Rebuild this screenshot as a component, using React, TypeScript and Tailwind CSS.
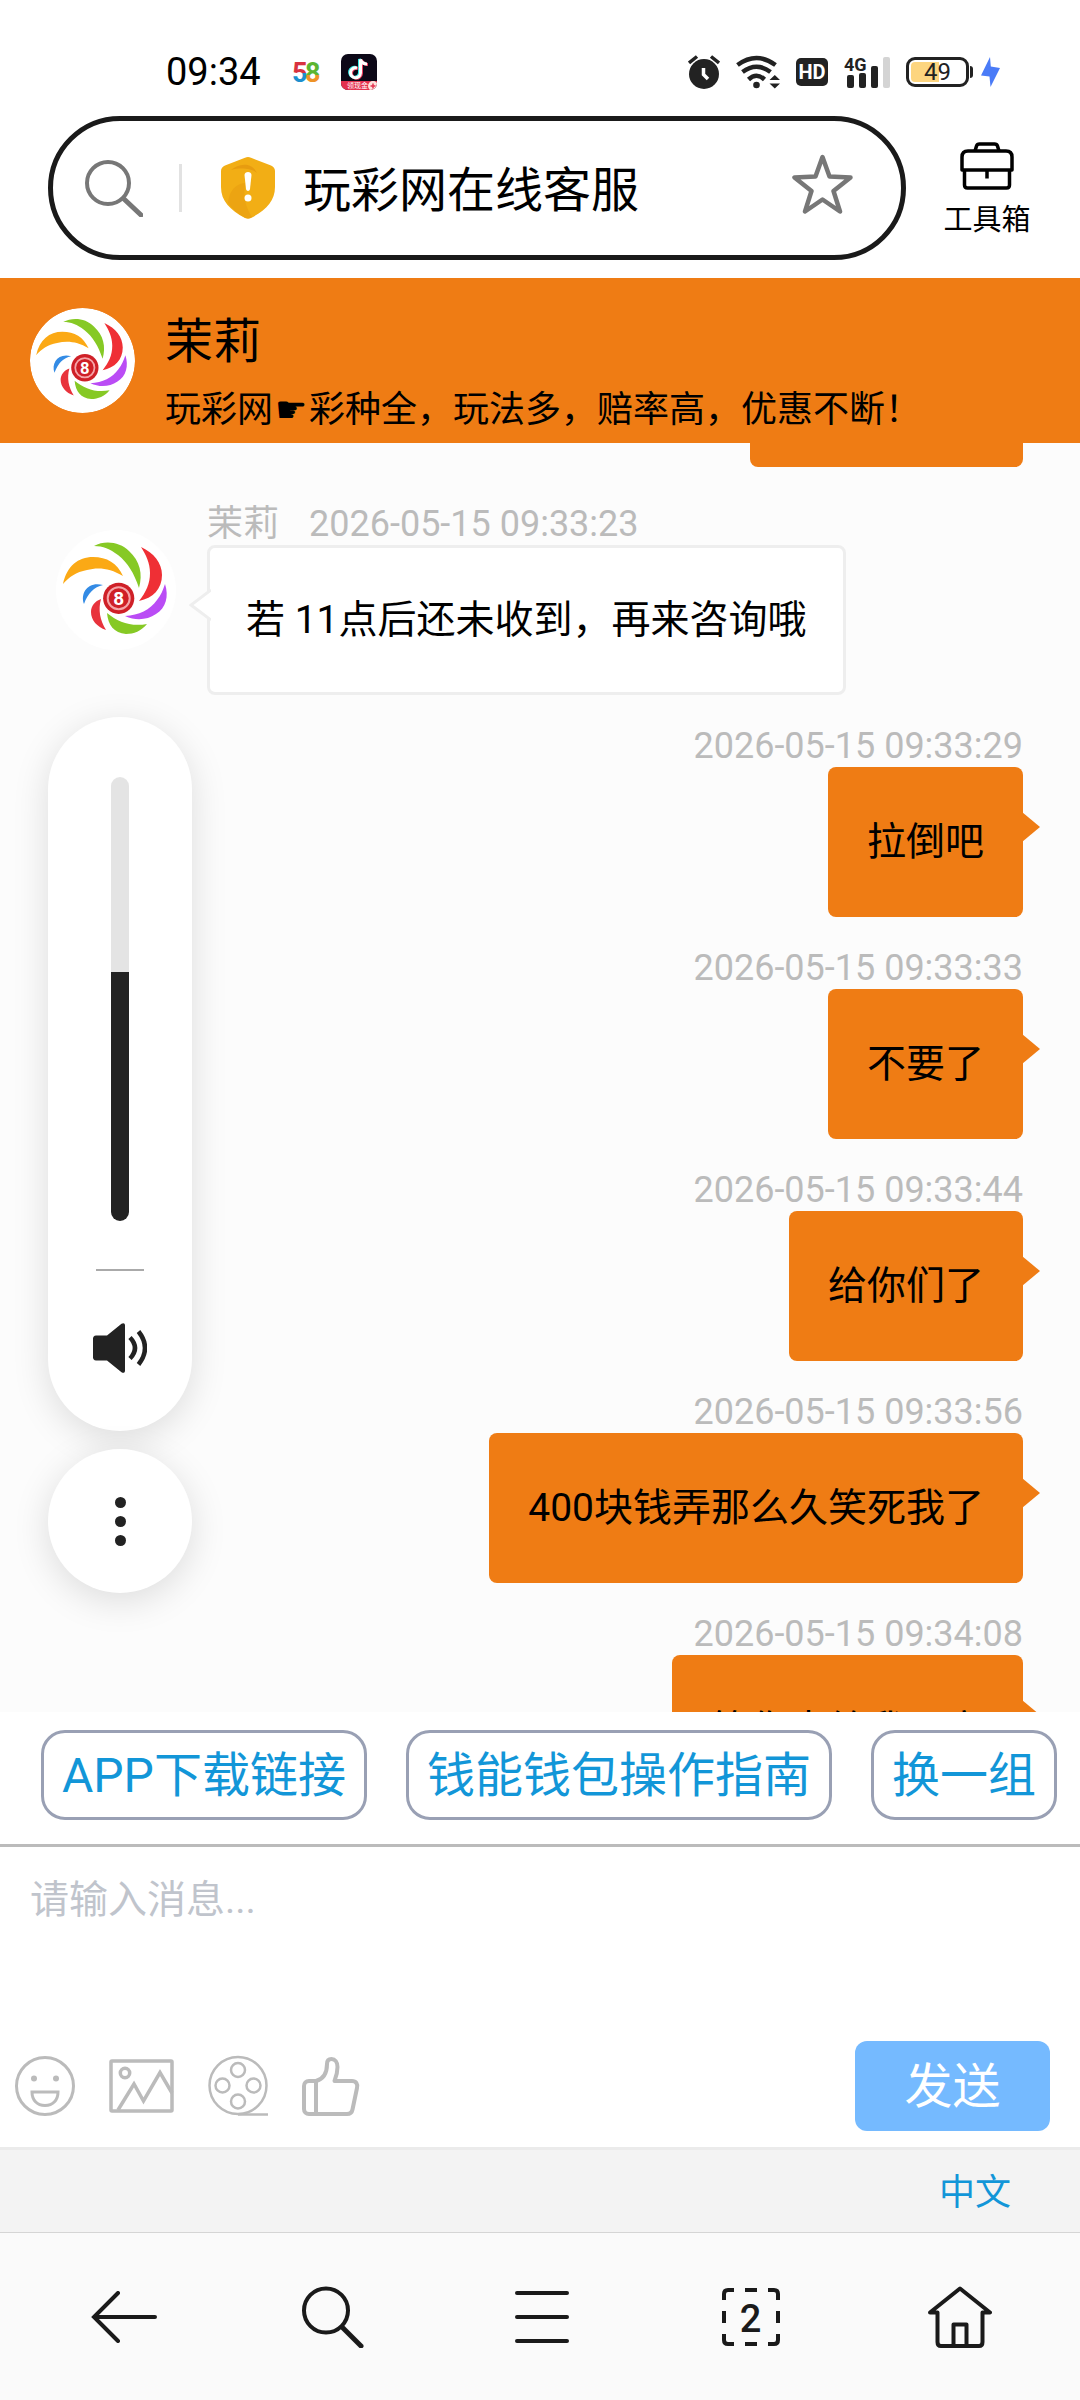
import { useState } from 'react'

const replies = [
  { time: '2026-05-15 09:33:29', text: '拉倒吧' },
  { time: '2026-05-15 09:33:33', text: '不要了' },
  { time: '2026-05-15 09:33:44', text: '给你们了' },
  { time: '2026-05-15 09:33:56', text: '400块钱弄那么久笑死我了' },
  { time: '2026-05-15 09:34:08', text: '等你来给我开户' },
]

const shortcuts = ['APP下载链接', '钱能钱包操作指南', '换一组']

function Logo({ className }: { className: string }) {
  return (
    <svg className={className} viewBox="6 10 120 120">
      <circle cx="66" cy="70" r="60" fill="#fff" />
      <path d="M13 64C17 46 28 37 43 37c14 0 24 6 30 19C60 48 48 47 37 50c-11 2-18 7-24 14z" fill="#fba915" />
      <path d="M44 26c11-6 26-4 35 5 11 10 14 23 10 37C84 53 78 43 68 35c-8-6-15-9-24-9z" fill="#86c925" />
      <path d="M91 27c13 6 21 16 21 28 0 14-9 23-23 26 7-9 11-17 11-28 0-10-4-18-9-26z" fill="#ef2f35" />
      <path d="M115 64c4 12 1 24-9 30-9 6-20 7-31 2 14-1 25-6 32-16 4-5 6-10 8-16z" fill="#ba4cf5" />
      <path d="M57 93c11 9 24 14 40 11-6 7-13 10-21 10-12-1-18-9-19-21z" fill="#86c925" />
      <path d="M51 79c-3 11-1 21 5 31-9-3-15-10-15-18 0-6 4-11 10-13z" fill="#e8333c" />
      <path d="M53 65c-9 2-15 8-19 19-4-11 4-23 19-19z" fill="#338be5" />
      <circle cx="68.700" cy="78.300" r="15.600" fill="#cf2027" />
      <circle cx="68.700" cy="78.300" r="11" fill="none" stroke="#f5a5a8" strokeWidth="2" />
      <text x="68.700" y="85" textAnchor="middle" fontSize="19" fontWeight="700" fill="#fff">8</text>
    </svg>
  )
}

function StatusBar() {
  return (
    <div className="flex h-[116px] items-center justify-between pt-7 pr-20 pl-[166px]">
      <div className="flex items-center">
        <span className="text-[38px] leading-none">09:34</span>
        <svg className="ml-8 w-7 h-9" viewBox="0 0 28 36">
          <defs>
            <linearGradient id="five" x1="0" y1="0" x2="0" y2="1">
              <stop offset=".5" stopColor="#d8323f" />
              <stop offset=".5" stopColor="#1d8fce" />
            </linearGradient>
            <linearGradient id="eight" x1="0" y1="0" x2="0" y2="1">
              <stop offset=".55" stopColor="#5cb531" />
              <stop offset=".55" stopColor="#ee9327" />
            </linearGradient>
          </defs>
          <text x="-1" y="28" fontSize="27" fontWeight="700" fill="url(#five)">5</text>
          <text x="12" y="28" fontSize="27" fontWeight="700" fill="url(#eight)">8</text>
        </svg>
        <svg className="ml-5 size-9" viewBox="0 0 36 36">
          <clipPath id="tile"><rect width="36" height="36" rx="7" /></clipPath>
          <g clipPath="url(#tile)">
            <rect width="36" height="36" fill="#0c0817" />
            <g fill="none" strokeWidth="3">
              <path d="M15 13.500a5 5 0 1 0 3.500 5V5c1 3 3 4.500 6.500 4.500" stroke="#39e6e4" />
              <path d="M17 14.500a5 5 0 1 0 3.500 5V6c1 3 3 4.500 6.500 4.500" stroke="#ef3d5f" />
              <path d="M16 14a5 5 0 1 0 3.500 5V5.500c1 3 3 4.500 6.500 4.500" stroke="#fff" />
            </g>
            <path d="M0 27h36v9H0z" fill="#e4314f" />
            <circle cx="32" cy="32" r="5" fill="#fde3dc" />
            <path d="M29.500 32h5M32 29.500v5" stroke="#e4314f" strokeWidth="1.500" />
            <text x="6" y="34" fontSize="7" fill="#fff">领现金</text>
          </g>
        </svg>
      </div>

      <div className="flex items-center gap-4 text-[#222]">
        <svg className="h-[34px] w-8" viewBox="0 0 32 34" fill="none" stroke="currentColor" strokeWidth="3.500">
          <circle cx="16" cy="19" r="15" fill="currentColor" stroke="none" />
          <path d="M1 8l8-6.500M31 8l-8-6.500" />
          <path d="M15.500 13v6.500L20 24" stroke="#fff" />
        </svg>
        <svg className="h-[34px] w-11" viewBox="0 0 44 34" fill="none" stroke="currentColor" strokeWidth="4.500">
          <path d="M1.500 10Q20.500-4 39.500 10M6.500 17Q20.500 6.500 34.500 17M12.500 24.500Q20.500 17 28.500 24.500" />
          <circle cx="20.500" cy="30" r="3.300" fill="currentColor" stroke="none" />
          <path d="M33.500 25l5.300-5 5.200 5zM33.500 28.500h10.500l-5.200 5z" fill="currentColor" stroke="none" />
        </svg>
        <span className="flex h-7 w-8 items-center justify-center rounded-[5px] bg-[#222] text-[20px] leading-none font-bold text-white">HD</span>
        <svg className="h-9 w-[46px]" viewBox="0 0 46 36" fill="currentColor">
          <text x="0" y="17" fontSize="18" fontWeight="700">4G</text>
          <rect x="3" y="21" width="7" height="13" rx="2" />
          <rect x="15" y="19" width="7" height="15" rx="2" />
          <rect x="27" y="12" width="7" height="22" rx="2" />
          <rect x="39" y="3" width="7" height="31" rx="2" fill="#d4d4d4" />
        </svg>
        <div className="flex items-center">
          <span className="flex h-[30px] w-[63px] items-center justify-center rounded-[9px] border-[3px] border-[#222] bg-[linear-gradient(to_right,#fdd57f_52%,#fff_52%)] bg-clip-content p-[2px] text-[24px] leading-none">49</span>
          <span className="ml-px h-3 w-[3px] rounded-r bg-[#222]" />
          <svg className="ml-2 h-[30px] w-[19px]" viewBox="0 0 19 30">
            <path d="M9 0L0 18.500l8.500 1L9.500 30 19 11l-9.200-1.500z" fill="#4a7bf7" />
          </svg>
        </div>
      </div>
    </div>
  )
}

function AddressBar() {
  return (
    <div className="flex h-[144px] pl-12 mb-[18px]">
      <div className="flex min-w-0 flex-1 items-center rounded-full border-[5px] border-[#1a1a1a] pr-12 pl-8">
        <svg className="size-[58px]" viewBox="0 0 58 58" fill="none" stroke="#777" strokeLinecap="round">
          <circle cx="23" cy="24" r="21" strokeWidth="4" />
          <path d="M39 40l17 16" strokeWidth="5" />
        </svg>
        <span className="mr-[39px] ml-9 h-12 w-[3px] bg-[#e2e2e2]" />
        <svg className="h-[62px] w-[54px]" viewBox="0 0 54 62">
          <path d="M24 .8c2-1 4-1 6 0L50 8.500c2.500 1 4 3 4 5.500v16c0 14-9 23-24 31-2 1-4 1-6 0C9 53 0 44 0 30V14c0-2.500 1.500-4.500 4-5.500z" fill="#f2ae15" />
          <path d="M10 13c7-6 20-9 26 3-4-4-16-6-26-3z" fill="#e79c10" />
          <path d="M7 46c1-12 8-20 18-20-4 12 0 25 6 34-2 1.500-5 1.500-7 .8C17 57 11 52 7 46z" fill="#e99f11" opacity=".7" />
          <path d="M23.500 18c0-4 7-4 7 0L29 32c-.4 2.500-3.600 2.500-4 0z" fill="#fff" />
          <circle cx="27" cy="41" r="3.500" fill="#fff" />
        </svg>
        <input
          aria-label="地址栏"
          defaultValue="玩彩网在线客服"
          className="ml-7 h-20 min-w-0 flex-1 bg-transparent pb-1 text-[48px] text-black outline-none"
        />
        <button aria-label="收藏" className="pb-2">
          <svg className="h-[60px] w-[61px]" viewBox="0 0 61 60" fill="none" stroke="#777" strokeWidth="4.500" strokeLinejoin="round">
            <path d="M30.500 3l7 19.500 21 1-17 13.500L48 57.500l-17.500-12L13 57.500 19.500 37 2.500 23.500l21-1z" />
          </svg>
        </button>
      </div>
      <button className="mr-3 flex w-[162px] flex-col items-center pt-[26px] text-[29px] leading-[44px]">
        <svg className="mb-2 h-12 w-[54px]" viewBox="0 0 54 48" fill="none" stroke="currentColor" strokeWidth="3.500" strokeLinejoin="round">
          <path d="M15 9l1.500-5c.5-1.500 1.500-2 3-2h15c1.500 0 2.500.5 3 2L39 9" />
          <path d="M2 28V15c0-4 2-6 6-6h38c4 0 6 2 6 6v13z" />
          <path d="M4.500 28v15c0 2 1 3 3 3h39c2 0 3-1 3-3V28M27 28v8.500" />
        </svg>
        工具箱
      </button>
    </div>
  )
}

function VolumePanel() {
  const [volume, setVolume] = useState(56)

  return (
    <div className="absolute top-[717px] left-12 flex flex-col gap-[18px] text-[#222]">
      <div className="flex w-36 flex-col items-center rounded-full bg-white pt-[60px] pb-[58px] shadow-[0_8px_36px_rgba(0,0,0,0.13)]">
        <input
          type="range"
          aria-label="音量"
          value={volume}
          onChange={(e) => setVolume(Number(e.target.value))}
          className="h-[444px] w-[18px] appearance-none rounded-full [direction:rtl] [writing-mode:vertical-lr] [&::-webkit-slider-thumb]:size-0 [&::-webkit-slider-thumb]:appearance-none"
          style={{ background: `linear-gradient(to top, #222 ${volume}%, #e4e4e4 ${volume}%)` }}
        />
        <span className="mt-12 h-[2px] w-12 bg-[#aaa]" />
        <button aria-label="静音" className="mt-[52px]">
          <svg className="block h-[50px] w-[54px]" viewBox="0 0 54 50" fill="currentColor">
            <path d="M3 12.500h11L28.500.8C30.500-.5 32 .3 32 2.500v45c0 2.200-1.500 3-3.500 1.700L14 37.500H3c-2 0-3-1.500-3-3v-19c0-1.500 1-3 3-3z" />
            <path d="M37 14.500q10 10.500 0 21M45.500 8.500q13 16.500 0 33" fill="none" stroke="currentColor" strokeWidth="4.500" />
          </svg>
        </button>
      </div>
      <button aria-label="更多" className="flex size-36 flex-col items-center justify-center gap-2 rounded-full bg-white shadow-[0_8px_36px_rgba(0,0,0,0.13)]">
        <span className="size-[11px] rounded-full bg-[#222]" />
        <span className="size-[11px] rounded-full bg-[#222]" />
        <span className="size-[11px] rounded-full bg-[#222]" />
      </button>
    </div>
  )
}

function Messages() {
  return (
    <main className="min-h-0 flex-1 overflow-hidden bg-[#fcfcfc] pr-[57px]">
      {/* Tail end of the bubble that is scrolled under the header */}
      <div className="ml-auto h-6 w-[273px] rounded-b-lg bg-[#ef7c14]" />

      <div className="mt-9 flex items-start gap-[31px] pl-14">
        <Logo className="mt-[27px] size-[120px]" />
        <div>
          <p className="flex gap-[30px] text-[36px] leading-[42px] text-[#bbb]">
            <span>茉莉</span>
            <time>2026-05-15 09:33:23</time>
          </p>
          <div className="relative rounded-lg border-[3px] border-[#eee] bg-white px-9 py-[49px] text-[39px] leading-[46px]">
            <svg className="absolute top-[41px] -left-[21px] h-[32px] w-[22px]" viewBox="0 0 22 32">
              <path d="M22 1L2 16l20 15" fill="#fff" stroke="#eee" strokeWidth="3" />
            </svg>
            若 11点后还未收到，再来咨询哦
          </div>
        </div>
      </div>

      {replies.map((reply) => (
        <div key={reply.time} className="mt-[30px] flex flex-col items-end">
          <time className="text-[36px] leading-[42px] text-[#bbb]">{reply.time}</time>
          <div className="relative rounded-lg bg-[#ef7c14] px-[39px] py-[52px] text-[39px] leading-[46px]">
            {reply.text}
            <svg className="absolute top-11 -right-[17px] h-8 w-[18px]" viewBox="0 0 18 32">
              <path d="M0 1l18 15L0 31z" fill="#ef7c14" />
            </svg>
          </div>
        </div>
      ))}
    </main>
  )
}

function Composer() {
  return (
    <form className="border-t-[3px] border-[#bbb] bg-white">
      <textarea
        aria-label="消息"
        placeholder="请输入消息..."
        className="block h-[194px] w-full resize-none px-[30px] py-[30px] text-[39px] leading-[46px] outline-none placeholder:text-[#c0c4cc]"
      />
      <div className="flex items-center justify-between pr-[30px] pb-4 pl-[15px]">
        <div className="flex items-center gap-[34px] text-[#bbb]">
          <button type="button" aria-label="表情">
            <svg className="block size-[60px]" viewBox="0 0 60 60" fill="none" stroke="currentColor" strokeWidth="3">
              <circle cx="30" cy="30" r="28.500" />
              <circle cx="19" cy="22.500" r="3" fill="currentColor" stroke="none" />
              <circle cx="41" cy="22.500" r="3" fill="currentColor" stroke="none" />
              <path d="M17 36h26c0 8-5 13.500-13 13.500S17 44 17 36z" />
            </svg>
          </button>
          <button type="button" aria-label="图片">
            <svg className="block h-[54px] w-[65px]" viewBox="0 0 65 54" fill="none" stroke="currentColor" strokeWidth="3.500">
              <rect x="2" y="2" width="61" height="50" rx="1" />
              <circle cx="16" cy="14" r="4.700" />
              <path d="M9 51l16-26 9.500 17L51 13.500 63 34" />
            </svg>
          </button>
          <button type="button" aria-label="视频">
            <svg className="block h-[62px] w-[60px]" viewBox="0 0 60 62" fill="none" stroke="currentColor" strokeWidth="2.500">
              <circle cx="30" cy="30.500" r="28.500" />
              <circle cx="30" cy="15" r="7" />
              <circle cx="14.500" cy="30.500" r="7" />
              <circle cx="45.500" cy="30.500" r="7" />
              <circle cx="30" cy="46.500" r="7" />
              <path d="M30 59.500h30" />
            </svg>
          </button>
          <button type="button" aria-label="评价">
            <svg className="block h-[59px] w-[58px]" viewBox="0 0 58 59" fill="none" stroke="currentColor" strokeWidth="4" strokeLinejoin="round">
              <path d="M14 24H7c-3 0-5 2-5 5v23c0 3 2 5 5 5h38c3 0 5-2 5.500-4.500L55 31c1-4-1-7-5-7H32.500c2-5 3-9 3-14 0-5-2.500-8-6-8-3 0-4.500 2-4.500 5 0 9-3.500 15-11 17zM14 24v33" />
            </svg>
          </button>
        </div>
        <button type="button" className="h-[90px] w-[195px] rounded-xl bg-[#75baff] pt-[2px] text-[48px] leading-none text-white">发送</button>
      </div>
    </form>
  )
}

function BrowserNav() {
  return (
    <nav className="flex h-[168px] items-center border-t border-[#d5d5d5] bg-[#fafafa] pr-4 pl-5 text-[#1a1a1a]">
      <button aria-label="后退" className="flex flex-1 justify-center">
        <svg className="h-[52px] w-[66px]" viewBox="0 0 66 52" fill="none" stroke="currentColor" strokeWidth="4" strokeLinecap="round">
          <path d="M64 26H4M27 2L3 26l24 24" />
        </svg>
      </button>
      <button aria-label="搜索" className="flex flex-1 justify-center">
        <svg className="size-[62px]" viewBox="0 0 62 62" fill="none" stroke="currentColor" strokeWidth="4" strokeLinecap="round">
          <circle cx="24" cy="24.500" r="22" />
          <path d="M41 42l18 18" strokeWidth="5" />
        </svg>
      </button>
      <button aria-label="菜单" className="flex flex-1 justify-center">
        <svg className="h-[52px] w-[54px]" viewBox="0 0 54 52" stroke="currentColor" strokeWidth="4" strokeLinecap="round">
          <path d="M2 2h50M2 26h50M2 50h50" />
        </svg>
      </button>
      <button aria-label="标签页" className="flex flex-1 justify-center">
        <svg className="size-[58px]" viewBox="0 0 58 58" fill="none" stroke="currentColor" strokeWidth="4">
          <path d="M2 12V6c0-2.500 1.500-4 4-4h6M46 2h6c2.500 0 4 1.500 4 4v6M56 46v6c0 2.500-1.500 4-4 4h-6M12 56H6c-2.500 0-4-1.500-4-4v-6M23 2h12M23 56h12M2 23v12M56 23v12" />
          <text x="28.500" y="44" textAnchor="middle" fontSize="38" fontWeight="500" fill="currentColor" stroke="none">2</text>
        </svg>
      </button>
      <button aria-label="主页" className="flex flex-1 justify-center">
        <svg className="h-[62px] w-16" viewBox="0 0 64 62" fill="none" stroke="currentColor" strokeWidth="4" strokeLinejoin="round">
          <path d="M9.500 26.500H2L32 2.500l30 24h-7.500V56c0 2.500-1 4-3.500 4H13c-2.500 0-3.500-1.500-3.500-4z" />
          <path d="M25.500 60V38.500h13V60" />
        </svg>
      </button>
    </nav>
  )
}

export default function App() {
  return (
    <div className="relative flex h-screen flex-col overflow-hidden bg-white font-[Roboto,'Noto_Sans_CJK_SC',sans-serif] text-black">
      <StatusBar />
      <AddressBar />

      <header className="flex items-center gap-[30px] bg-[#ef7c14] pl-[30px]">
        <Logo className="size-[105px] rounded-full" />
        <div className="h-[165px] pt-[30px]">
          <h1 className="text-[48px] leading-[68px]">茉莉</h1>
          <p className="text-[36px] leading-[68px]">
            玩彩网<span className="inline-block w-9 text-center font-['DejaVu_Sans']">☛</span>彩种全，玩法多，赔率高，优惠不断！
          </p>
        </div>
      </header>

      <Messages />

      <div className="flex gap-[39px] overflow-hidden pt-[18px] pb-6 pl-[41px]">
        {shortcuts.map((label) => (
          <button key={label} className="h-[90px] shrink-0 rounded-3xl border-[3px] border-[#99a0b4] px-[18px] pt-[2px] text-[48px] leading-none text-[#1296d8]">
            {label}
          </button>
        ))}
      </div>

      <Composer />

      <div className="flex h-[85px] items-center justify-end border-t-[3px] border-[#ebebeb] bg-[#f3f3f3] pt-1 pr-[69px]">
        <button className="text-[36px] text-[#1296d8]">中文</button>
      </div>

      <BrowserNav />
      <VolumePanel />
    </div>
  )
}
